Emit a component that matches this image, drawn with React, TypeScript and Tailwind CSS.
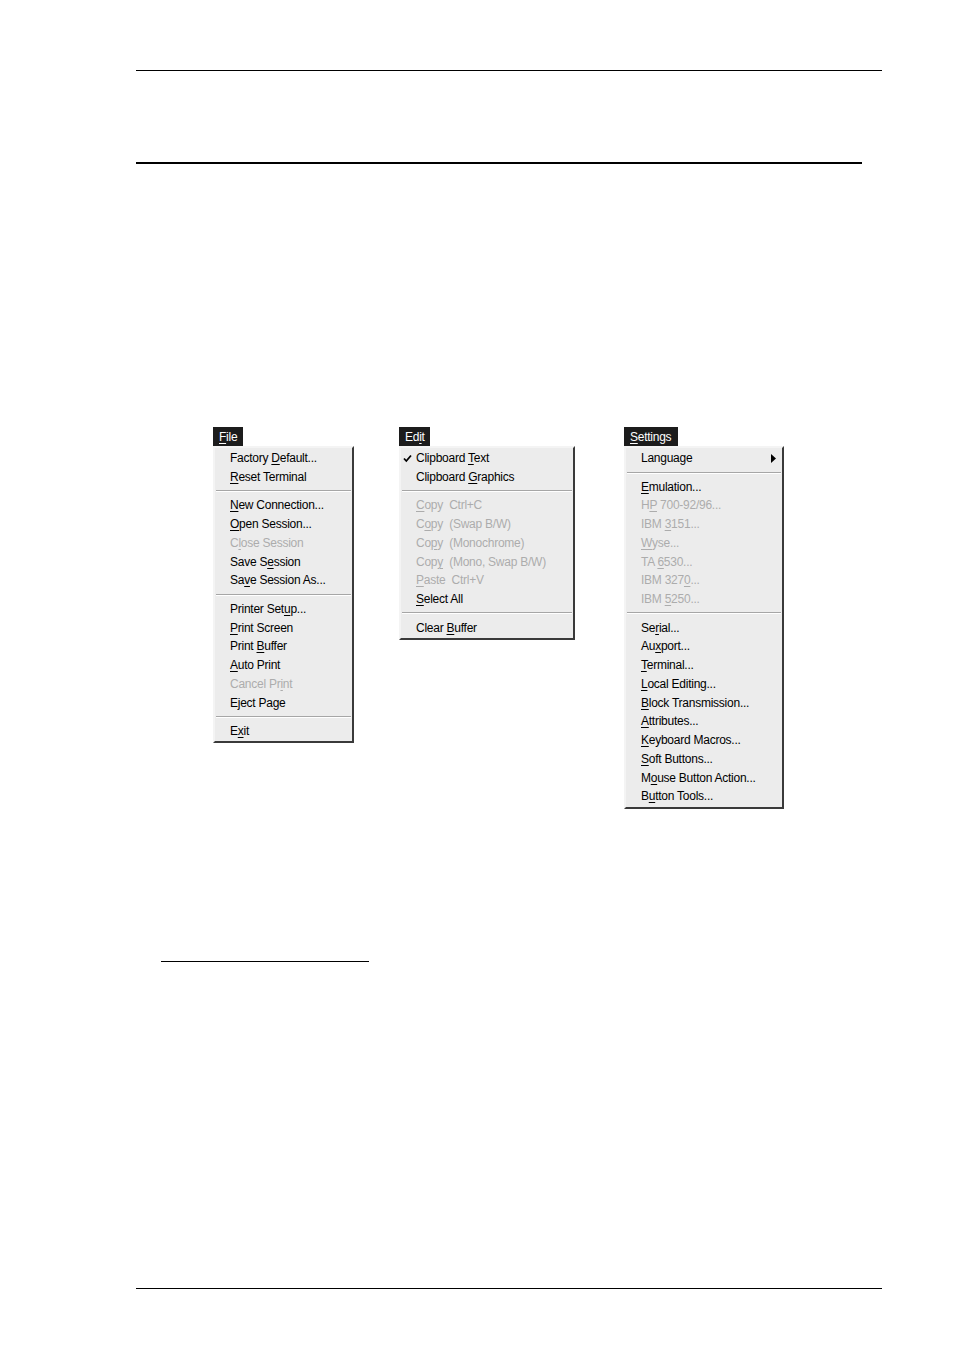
import React from 'react';

type Item =
  | { sep: true }
  | { label: string; key?: number; disabled?: boolean; checked?: boolean; sub?: boolean; sep?: false };

const fileItems: Item[] = [
  { label: 'Factory Default...', key: 8 },
  { label: 'Reset Terminal', key: 0 },
  { sep: true },
  { label: 'New Connection...', key: 0 },
  { label: 'Open Session...', key: 0 },
  { label: 'Close Session', key: 1, disabled: true },
  { label: 'Save Session', key: 6 },
  { label: 'Save Session As...', key: 2 },
  { sep: true },
  { label: 'Printer Setup...', key: 11 },
  { label: 'Print Screen', key: 0 },
  { label: 'Print Buffer', key: 6 },
  { label: 'Auto Print', key: 0 },
  { label: 'Cancel Print', key: 9, disabled: true },
  { label: 'Eject Page' },
  { sep: true },
  { label: 'Exit', key: 1 },
];

const editItems: Item[] = [
  { label: 'Clipboard Text', key: 10, checked: true },
  { label: 'Clipboard Graphics', key: 10 },
  { sep: true },
  { label: 'Copy  Ctrl+C', key: 0, disabled: true },
  { label: 'Copy  (Swap B/W)', key: 1, disabled: true },
  { label: 'Copy  (Monochrome)', key: 2, disabled: true },
  { label: 'Copy  (Mono, Swap B/W)', key: 3, disabled: true },
  { label: 'Paste  Ctrl+V', key: 0, disabled: true },
  { label: 'Select All', key: 0 },
  { sep: true },
  { label: 'Clear Buffer', key: 6 },
];

const settingsItems: Item[] = [
  { label: 'Language', sub: true },
  { sep: true },
  { label: 'Emulation...', key: 0 },
  { label: 'HP 700-92/96...', key: 1, disabled: true },
  { label: 'IBM 3151...', key: 4, disabled: true },
  { label: 'Wyse...', key: 0, disabled: true },
  { label: 'TA 6530...', key: 3, disabled: true },
  { label: 'IBM 3270...', key: 7, disabled: true },
  { label: 'IBM 5250...', key: 4, disabled: true },
  { sep: true },
  { label: 'Serial...', key: 2 },
  { label: 'Auxport...', key: 2 },
  { label: 'Terminal...', key: 0 },
  { label: 'Local Editing...', key: 0 },
  { label: 'Block Transmission...', key: 0 },
  { label: 'Attributes...', key: 0 },
  { label: 'Keyboard Macros...', key: 0 },
  { label: 'Soft Buttons...', key: 0 },
  { label: 'Mouse Button Action...', key: 1 },
  { label: 'Button Tools...', key: 1 },
];

function Label({ text, k }: { text: string; k?: number }) {
  if (k === undefined) return <span className="whitespace-pre">{text}</span>;
  return (
    <span className="whitespace-pre">
      {text.slice(0, k)}
      <span className="underline decoration-1 underline-offset-[2px]">{text[k]}</span>
      {text.slice(k + 1)}
    </span>
  );
}

function Menu({ title, titleKey, items, width, headerWidth }: { title: string; titleKey: number; items: Item[]; width: string; headerWidth: string }) {
  return (
    <div className={`flex flex-col ${width}`}>
      <div className={`h-[19px] ${headerWidth} bg-[#1c1c1c] text-white flex items-center pl-[6px]`}>
        <Label text={title} k={titleKey} />
      </div>
      <div className="bg-[#ececec] border-2 border-t-[#f4f4f4] border-l-[#f4f4f4] border-r-[#3a3a3a] border-b-[#3a3a3a] py-px">
        {items.map((it, i) =>
          it.sep ? (
            <div key={i} className="py-[3.8px] px-px">
              <div className="h-px bg-[#a6a6a6]" />
              <div className="h-px bg-white" />
            </div>
          ) : (
            <div
              key={i}
              className={`relative h-[18.75px] flex items-center pl-[15px] pr-2 ${it.disabled ? 'text-[#acacac]' : 'text-black'}`}
            >
              {it.checked && (
                <svg className="absolute left-[2px] top-[5px]" width="9" height="9" viewBox="0 0 9 9">
                  <path d="M1 4.5 L3.3 7 L8 1.5" fill="none" stroke="#000" strokeWidth="1.8" />
                </svg>
              )}
              <Label text={it.label} k={it.key} />
              {it.sub && (
                <svg className="absolute right-[6px] top-[5px]" width="5" height="9" viewBox="0 0 5 9">
                  <path d="M0 0 L5 4.5 L0 9 Z" fill="#000" />
                </svg>
              )}
            </div>
          )
        )}
      </div>
    </div>
  );
}

export default function App() {
  return (
    <div className="w-[954px] h-[1352px] bg-white flex flex-col text-[12px] tracking-[-0.25px] leading-none" style={{ fontFamily: '"Liberation Sans", Arial, sans-serif' }}>
      <div className="mt-[70px] ml-[136px] w-[746px] h-px bg-black" />
      <div className="mt-[91px] ml-[136px] w-[726px] h-[2px] bg-black" />
      <div className="mt-[263px] ml-[213px] flex items-start">
        <Menu title="File" titleKey={0} items={fileItems} width="w-[141px]" headerWidth="w-[30px]" />
        <div className="ml-[45px]">
          <Menu title="Edit" titleKey={2} items={editItems} width="w-[176px]" headerWidth="w-[31px]" />
        </div>
        <div className="ml-[49px]">
          <Menu title="Settings" titleKey={0} items={settingsItems} width="w-[160px]" headerWidth="w-[54px]" />
        </div>
      </div>
      <div className="mt-[152px] ml-[161px] w-[208px] h-px bg-black" />
      <div className="mt-[326px] ml-[136px] w-[746px] h-px bg-black" />
    </div>
  );
}
